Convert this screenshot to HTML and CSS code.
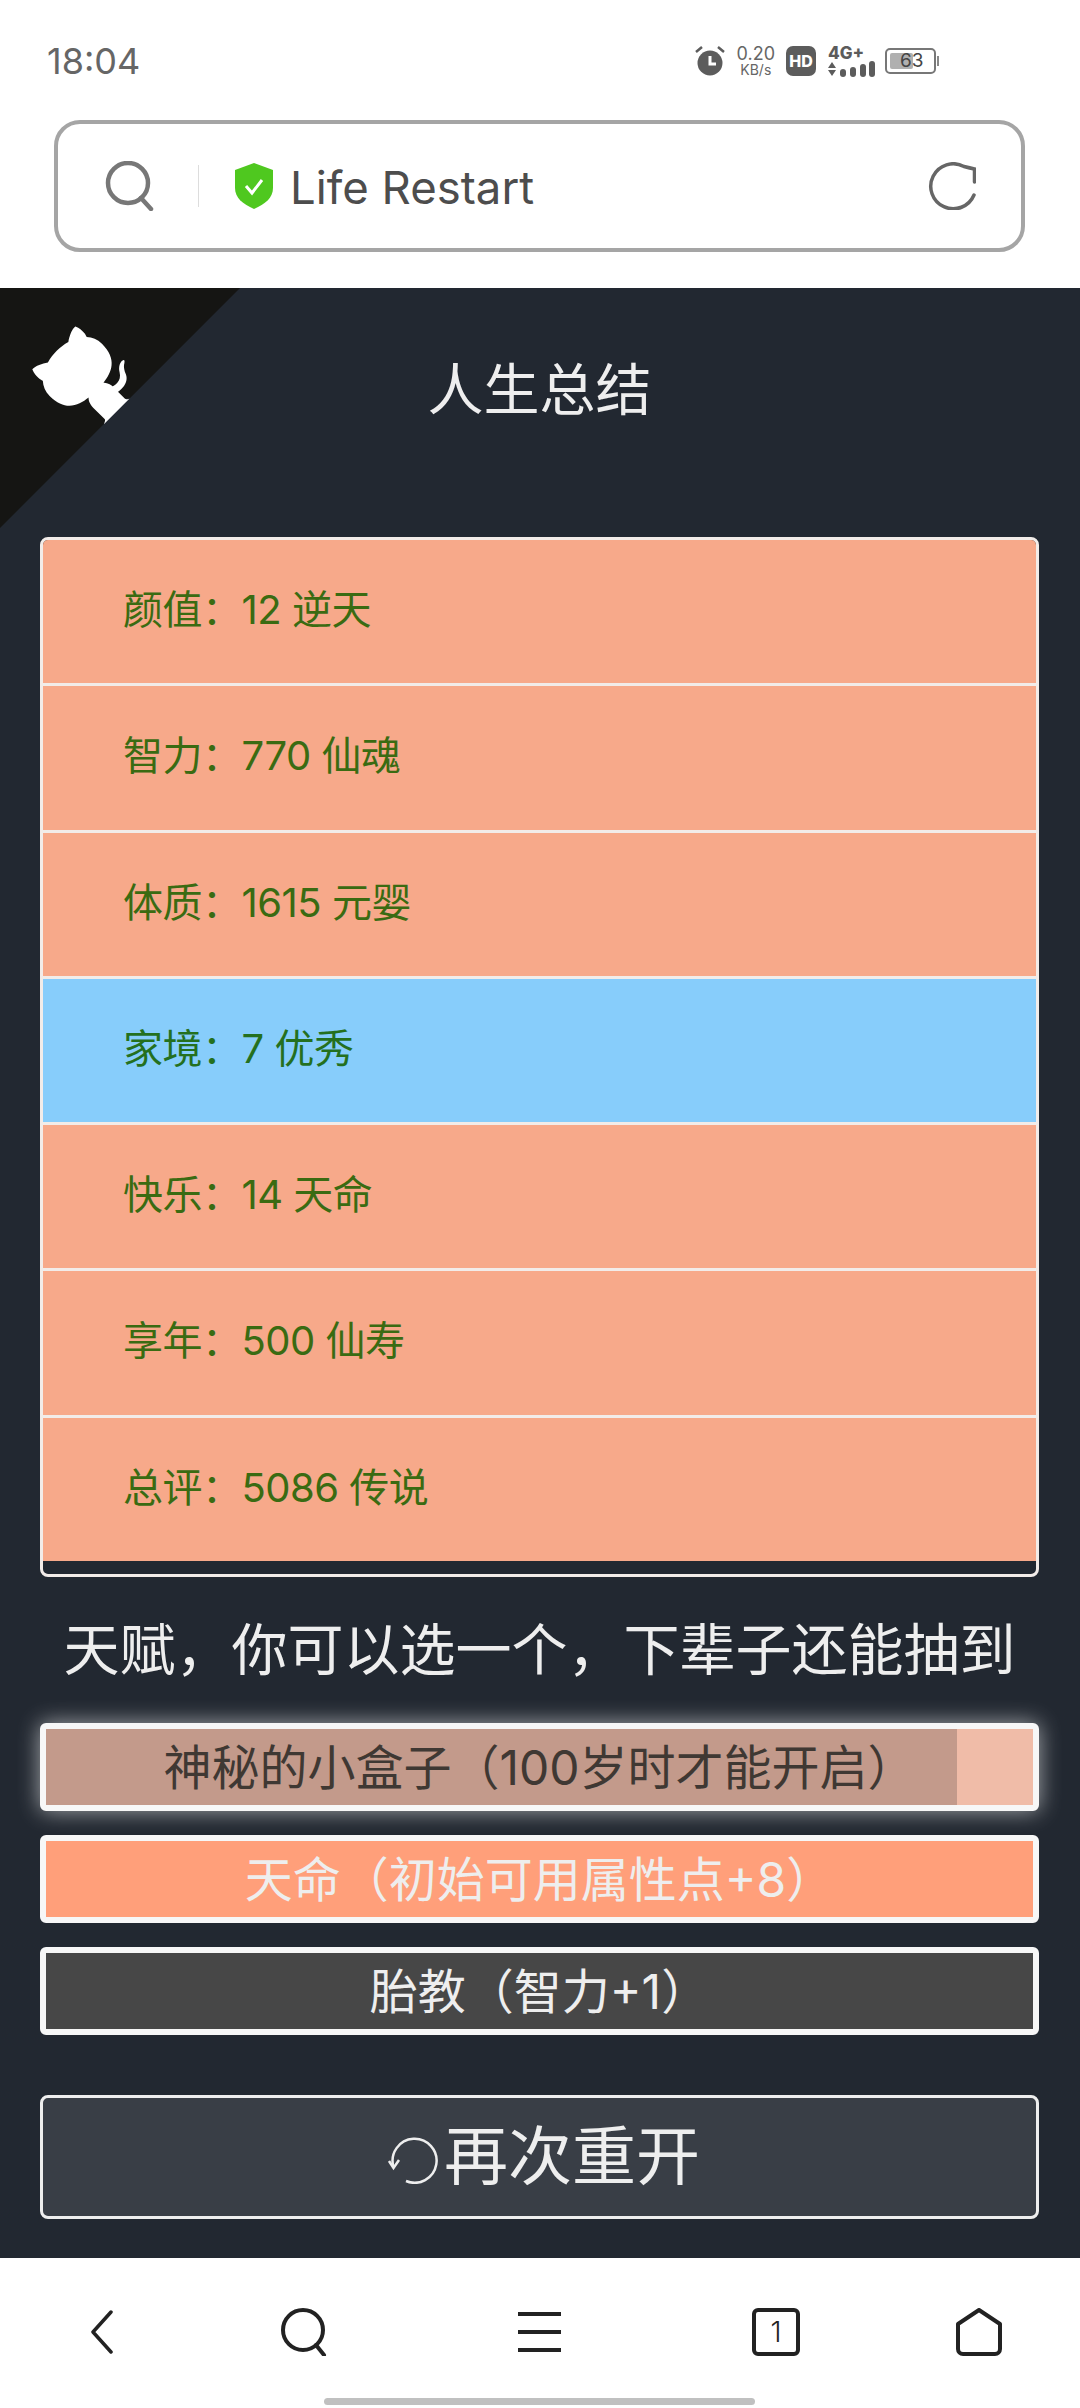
FILE: index.html
```html
<!DOCTYPE html>
<html>
<head>
    <title>Life Restart</title>
    <meta charset="UTF-8">
    <link rel="stylesheet" href="styles.css">
</head>
<body>
    <div id="wrapper">
        <div class="statusBar">
            <span class="statusTime">18:04</span>
            <div class="statusIcons">
                <svg class="iconAlarm" width="30" height="30" viewBox="0 0 30 30">
                    <circle cx="15" cy="17" r="12.5" fill="#5c5c5c"/>
                    <path d="M15 10v8h6" fill="none" stroke="#fff" stroke-width="3"/>
                    <path d="M1 6l6-5M29 6l-6-5" stroke="#5c5c5c" stroke-width="2.5"/>
                </svg>
                <div class="netSpeed"><span>0.20</span><span class="netUnit">KB/s</span></div>
                <div class="hdBadge">HD</div>
                <div class="signal">
                    <span class="signalLabel">4G+</span>
                    <svg width="47" height="16" viewBox="0 0 47 16">
                        <path d="M0 7l4-6 4 6zM0 9l4 6 4-6z" fill="#5c5c5c"/>
                        <rect x="12" y="8" width="6" height="8" rx="3" fill="#5c5c5c"/>
                        <rect x="22" y="6" width="6" height="10" rx="3" fill="#5c5c5c"/>
                        <rect x="32" y="3" width="6" height="13" rx="3" fill="#5c5c5c"/>
                        <rect x="41" y="0" width="6" height="16" rx="3" fill="#5c5c5c"/>
                    </svg>
                </div>
                <div class="battery"><div class="batteryFill"></div><span class="batteryText">63</span></div>
                <div class="batteryTip"></div>
            </div>
        </div>

        <div class="addressBar">
            <svg width="50" height="50" viewBox="0 0 50 50">
                <circle cx="23" cy="22" r="20" fill="none" stroke="#777" stroke-width="4.5"/>
                <path d="M36 37l10 11" stroke="#777" stroke-width="4.5" stroke-linecap="round"/>
            </svg>
            <div class="addressDivider"></div>
            <svg width="40" height="46" viewBox="0 0 40 46">
                <path d="M20 0l19 7v18c0 10-8 16-19 21C9 41 1 35 1 25V7z" fill="#4fc81f"/>
                <path d="M12 23l6 7 10-13" fill="none" stroke="#fff" stroke-width="3"/>
            </svg>
            <span class="addressTitle">Life Restart</span>
            <svg class="addressReload" width="48" height="48" viewBox="0 0 48 48">
                <path d="M46 33A22.500 22.500 0 1 1 36 4.500Q42 6 46.500 7V20" fill="none" stroke="#666" stroke-width="3.500" stroke-linecap="round"/>
            </svg>
        </div>

        <div class="page">
            <svg class="cornerCat" width="240" height="240" viewBox="0 0 250 250">
                <g transform="translate(250 0) scale(-1 1)">
                    <path d="M0 0L115 115L130 115L142 142L250 250L250 0Z" fill="#151513"/>
                    <path d="M128.3 109C113.8 99.7 119 89.6 119 89.6C122 82.7 120.5 78.6 120.5 78.6C119.2 72 123.4 76.3 123.4 76.3C127.3 80.9 125.5 87.3 125.5 87.3C122.9 97.6 130.6 101.9 134.4 103.2" fill="#fff"/>
                    <path d="M115 115C114.9 115.1 118.7 116.5 119.8 115.4L133.7 101.6C136.9 99.2 139.9 98.4 142.2 98.6C133.8 88 127.5 74.4 143.8 58C148.5 53.4 154 51.2 159.7 51C160.3 49.4 163.2 43.6 171.4 40.1C171.4 40.1 176.1 42.5 178.8 56.2C183.1 58.6 187.2 61.8 190.9 65.4C194.5 69 197.7 73.2 200.1 77.6C213.8 80.2 216.3 84.9 216.3 84.9C212.7 93.1 206.9 96 205.4 96.6C205.1 102.4 203 107.8 198.3 112.5C181.9 128.9 168.3 122.5 157.7 114.1C157.9 116.9 156.7 120.9 152.7 124.9L141 136.5C139.8 137.7 141.6 141.9 141.8 141.8Z" fill="#fff"/>
                </g>
            </svg>

            <h1 class="pageTitle">人生总结</h1>

            <ul class="summaryList">
                <li class="summaryRow">颜值：12 逆天</li>
                <li class="summaryRow">智力：770 仙魂</li>
                <li class="summaryRow">体质：1615 元婴</li>
                <li class="summaryRow blueRow">家境：7 优秀</li>
                <li class="summaryRow">快乐：14 天命</li>
                <li class="summaryRow">享年：500 仙寿</li>
                <li class="summaryRow">总评：5086 传说</li>
            </ul>

            <div class="talentHeading">天赋，你可以选一个，下辈子还能抽到</div>

            <div class="talentList">
                <div class="talent talentMystery">
                    <div class="talentShade"></div>
                    <span class="talentText">神秘的小盒子（100岁时才能开启）</span>
                </div>
                <div class="talent talentOrange"><span class="talentText">天命（初始可用属性点+8）</span></div>
                <div class="talent talentGrey"><span class="talentText">胎教（智力+1）</span></div>
            </div>

            <div class="restartButton">
                <svg class="restartIcon" width="52" height="48" viewBox="0 0 52 48">
                    <path d="M19 45A22 22 0 1 0 6.500 31" fill="none" stroke="#eeeeee" stroke-width="2.500"/>
                    <path d="M2 25L6.500 32L12 24" fill="none" stroke="#eeeeee" stroke-width="2.500"/>
                </svg>
                <span class="restartLabel">再次重开</span>
            </div>
        </div>

        <div class="bottomBar">
            <svg class="navBack" width="23" height="44" viewBox="0 0 23 44">
                <path d="M21 2L3 22l18 20" fill="none" stroke="#222" stroke-width="3.500" stroke-linecap="round" stroke-linejoin="round"/>
            </svg>
            <svg class="navSearch" width="46" height="48" viewBox="0 0 46 48">
                <circle cx="22" cy="22" r="20" fill="none" stroke="#222" stroke-width="4"/>
                <path d="M35 37l8 10" stroke="#222" stroke-width="4" stroke-linecap="round"/>
            </svg>
            <svg class="navMenu" width="43" height="40" viewBox="0 0 43 40">
                <path d="M0 2h43M0 20h43M0 38h43" stroke="#222" stroke-width="4"/>
            </svg>
            <div class="navTabs">1</div>
            <svg class="navHome" width="46" height="48" viewBox="0 0 46 48">
                <path d="M23 2L44 16V41a5 5 0 0 1-5 5H7a5 5 0 0 1-5-5V16Z" fill="none" stroke="#222" stroke-width="4" stroke-linejoin="round"/>
            </svg>
        </div>
        <div class="homeIndicator"></div>
    </div>
</body>
</html>
```

FILE: styles.css
```css
* {
    box-sizing: border-box;
}

html, body {
    margin: 0;
    padding: 0;
    background-color: #fff;
}

body {
    font-family: "Inter", "Noto Sans CJK SC", sans-serif;
}

#wrapper {
    width: 1080px;
    height: 2408px;
    overflow: hidden;
}

/* status bar */
.statusBar {
    height: 120px;
    padding: 42px 141px 0 47px;
    display: flex;
    justify-content: space-between;
    align-items: flex-start;
}

.statusTime {
    font-size: 36px;
    line-height: 38px;
    color: #666;
}

.statusIcons {
    display: flex;
    align-items: center;
    height: 36px;
    margin-top: 1px;
}

.iconAlarm {
    margin-right: 12px;
}

.netSpeed {
    display: flex;
    flex-direction: column;
    align-items: center;
    font-size: 18px;
    line-height: 17px;
    color: #666;
    margin-right: 11px;
}

.netUnit {
    font-size: 14px;
    line-height: 15px;
}

.hdBadge {
    width: 30px;
    height: 30px;
    border-radius: 7px;
    background-color: #5c5c5c;
    color: #fff;
    font-size: 16px;
    font-weight: 800;
    line-height: 30px;
    text-align: center;
    margin-right: 12px;
}

.signal {
    display: flex;
    flex-direction: column;
    margin-right: 10px;
}

.signalLabel {
    font-size: 17px;
    font-weight: 800;
    line-height: 15px;
    color: #5c5c5c;
}

.battery {
    position: relative;
    width: 51px;
    height: 26px;
    border: 2px solid #777;
    border-radius: 5px;
    padding: 3px;
}

.batteryFill {
    width: 23px;
    height: 100%;
    background-color: #b0b0b0;
    border-radius: 2px;
}

.batteryText {
    position: absolute;
    left: 13px;
    top: 0;
    font-size: 19px;
    line-height: 22px;
    color: #444;
}

.batteryTip {
    width: 2px;
    height: 10px;
    background-color: #888;
    margin-left: 1px;
}

/* address bar */
.addressBar {
    width: 971px;
    height: 132px;
    margin: 0 0 36px 54px;
    border: 4px solid #a5a5a5;
    border-radius: 26px;
    padding: 0 45px 0 47px;
    display: flex;
    align-items: center;
}

.addressDivider {
    width: 1px;
    height: 42px;
    background-color: #ddd;
    margin: 0 35px 0 43px;
}

.addressTitle {
    font-size: 45.500px;
    color: #4d4d4d;
    margin: 2px 0 0 16px;
}

.addressReload {
    margin-left: auto;
}

/* game page */
.page {
    position: relative;
    height: 1970px;
    background-color: #222831;
    padding: 0 41px 0 40px;
    color: #eeeeee;
}

.cornerCat {
    position: absolute;
    left: 0;
    top: 0;
}

.pageTitle {
    margin: 0;
    height: 249px;
    padding-top: 62px;
    font-size: 56px;
    font-weight: 400;
    line-height: 80px;
    text-align: center;
}

.summaryList {
    list-style: none;
    margin: 0;
    padding: 0;
    height: 1040px;
    border: 3px solid #f2ece9;
    border-radius: 8px;
    overflow: hidden;
    background-color: #222831;
}

.summaryRow {
    height: 146.300px;
    padding-left: 80px;
    line-height: 140px;
    font-size: 40px;
    letter-spacing: -0.500px;
    color: #3a6b12;
    background-color: #f7a98a;
    border-bottom: 3px solid #f2ece9;
}

.summaryRow:last-child {
    height: 143px;
    border-bottom: none;
}

.blueRow {
    background-color: #87cdfb;
    color: #24701f;
}

.talentHeading {
    height: 146px;
    padding-top: 40px;
    font-size: 56px;
    line-height: 66px;
    text-align: center;
}

.talentList {
    display: flex;
    flex-direction: column;
    gap: 24px;
}

.talent {
    position: relative;
    height: 88px;
    border: 6px solid #f7f7f7;
    border-radius: 6px;
    text-align: center;
    font-size: 48px;
    line-height: 78px;
    color: #eeeeee;
}

.talentMystery {
    background-color: #f0bca8;
    color: #3f3833;
    box-shadow: 0 0 22px rgba(255, 255, 255, 0.6);
}

.talentShade {
    position: absolute;
    left: 0;
    top: 0;
    bottom: 0;
    width: 911px;
    background-color: #c39a8b;
}

.talentText {
    position: relative;
}

.talentOrange {
    background-color: #ff9f7a;
}

.talentGrey {
    background-color: #474747;
}

.restartButton {
    height: 124px;
    margin-top: 60px;
    padding-left: 8px;
    border: 3px solid #eeeeee;
    border-radius: 8px;
    background-color: #393e46;
    display: flex;
    justify-content: center;
    align-items: center;
    gap: 5px;
    font-size: 64px;
    color: #eeeeee;
}

.restartIcon {
    margin-top: 6px;
}

.restartLabel {
    margin-bottom: 12px;
}

/* browser toolbar */
.bottomBar {
    height: 140px;
    padding: 8px 0 0 90px;
    display: flex;
    align-items: center;
}

.navSearch {
    margin-left: 168px;
}

.navMenu {
    margin-left: 191px;
}

.navTabs {
    margin-left: 191px;
    width: 48px;
    height: 48px;
    border: 4px solid #222;
    border-radius: 6px;
    text-align: center;
    font-size: 28px;
    font-weight: 300;
    line-height: 40px;
    color: #222;
}

.navHome {
    margin-left: 156px;
}

.homeIndicator {
    width: 431px;
    height: 7px;
    margin: 0 0 0 324px;
    border-radius: 4px;
    background-color: #c0c0c0;
}
```
